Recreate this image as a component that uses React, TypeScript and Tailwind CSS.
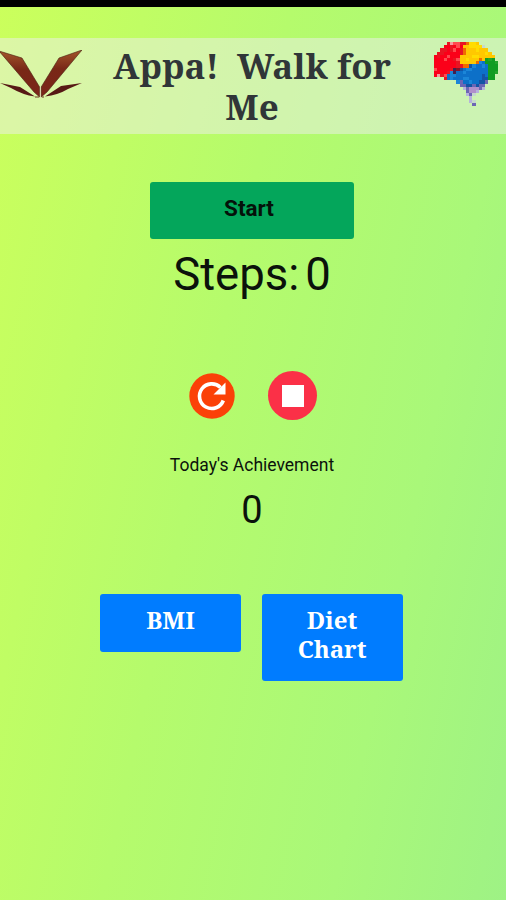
import React from "react";

const palette: Record<string, string> = {
  r: "#e81522", R: "#fb0019", p: "#ff4a50", o: "#f06a00", y: "#ffc800", Y: "#ffdc00",
  g: "#119c22", G: "#22a52b", b: "#0d70c8", B: "#1b86d8", n: "#1454a5", d: "#85142b",
  k: "#43204f", v: "#6c66b5", V: "#b08fcb", l: "#b6b2dc", w: "#c5d9cd", f: "#f79aa0",
};

const brain = [
  "....rfpprroYYy......",
  "...RRrRpRyyYYYYw....",
  "..rrRrpRroyyyYyyy...",
  ".rrRRRRRroyyyyyyYy..",
  "RrRRpRRRyyyyYYyyyyy.",
  "RRRpRRrpyyYyyyoygGg.",
  "RRRRRRRryyyyyoBbgggG",
  "RRRRRRRrroonBbbBbggg",
  "pRRRRrkdnbBBbbbbbggg",
  "RRRRrBkbbBbbbbbbbggG",
  "RfrpbBBbbbbbbbbnbgg.",
  "...rbBbbbBBbbbbnngg.",
  ".......BvbbBbbnnv...",
  "........vvnnvnvv....",
  ".........lvVVVvl....",
  "..........vVVl......",
  "..........lvw.......",
  "...........l........",
  "...........lw.......",
  "............v.......",
];

function Logo() {
  return (
    <svg className="mt-[12px] h-[49px] w-[82px] shrink-0" viewBox="0 0 82 49">
      <defs>
        <linearGradient id="wing" x1="0" y1="0" x2="0" y2="1">
          <stop offset="0" stopColor="#a3562b" />
          <stop offset=".4" stopColor="#792817" />
          <stop offset="1" stopColor="#7b2419" />
        </linearGradient>
      </defs>
      <path d="M-1 1L22 8L39.600 37V47L34 42Z" fill="url(#wing)" stroke="#48200f" strokeWidth=".6" />
      <path d="M82 0L59 8L41.200 37V47L47 42Z" fill="url(#wing)" stroke="#48200f" strokeWidth=".6" />
      <path d="M0 33L20 37L35 46.500Q23 45 11 38Z" fill="#571915" />
      <path d="M82 33L61 36L45 46.500Q58 45 68 39Z" fill="#571915" />
      <path d="M35 47H39M42 47H44" stroke="#6c361d" />
      <path d="M40.400 37V48" stroke="#e6d8bd" strokeWidth=".8" />
    </svg>
  );
}

function Brain() {
  return (
    <svg className="mt-[4px] h-[64px] w-[64px] shrink-0" viewBox="0 0 20 20" shapeRendering="crispEdges">
      {brain.flatMap((row, y) =>
        row.split("").map((c, x) =>
          c === "." ? null : <rect key={`${x}-${y}`} x={x} y={y} width="1" height="1" fill={palette[c]} />
        )
      )}
    </svg>
  );
}

export default function App() {
  return (
    <main className="flex h-[900px] w-[506px] flex-col overflow-hidden bg-[linear-gradient(102deg,#cbff5c_0%,#b5fb6c_42%,#a9f879_75%,#9ef285_100%)] font-['Roboto',sans-serif] text-[#0b120b]">
      <div className="h-[7px] shrink-0 bg-black" />
      <header className="mt-[31px] flex h-[96px] shrink-0 items-start bg-[#eeeeee]/50 pr-2">
        <Logo />
        <h1 className="flex-1 whitespace-pre pr-[12px] pt-[7px] text-center font-['Noto_Serif','DejaVu_Serif',serif] text-[35px] leading-[41px] font-bold text-[#303638]">{"Appa!  Walk for\nMe"}</h1>
        <Brain />
      </header>
      <button className="mt-[48px] ml-[150px] h-[57px] w-[204px] shrink-0 rounded-[3px] bg-[#04a65b] pr-[6px] pb-[4px] text-[22.5px] font-bold text-[#04120a]">Start</button>
      <div className="mt-[8px] flex h-[56px] shrink-0 items-center justify-center gap-[6px] pr-[2px] text-[45.5px] leading-[56px]">
        <span>Steps:</span><span>0</span>
      </div>
      <div className="mt-[68px] ml-[189px] flex h-[49px] shrink-0 items-center gap-[33px]">
        <button aria-label="Reset">
          <svg className="block h-[46px] w-[46px]" viewBox="0 0 46 46">
            <circle cx="23" cy="23" r="22.700" fill="#fb4108" />
            <path d="M34.300 27.500A12.300 12.300 0 1 1 31.500 14.500" fill="none" stroke="#fff" strokeWidth="3.600" />
            <path d="M36.500 9.500V21.500H24.500Z" fill="#fff" />
          </svg>
        </button>
        <button aria-label="Stop" className="flex h-[49px] w-[49px] items-center justify-center rounded-full bg-[#fb3047]">
          <span className="h-[22px] w-[22px] bg-white" />
        </button>
      </div>
      <p className="mt-[33px] shrink-0 pr-[2px] text-center text-[17.5px] leading-[25px]">Today's Achievement</p>
      <p className="mt-[7px] shrink-0 pr-[2px] text-center text-[38px] leading-[50px]">0</p>
      <div className="mt-[59px] ml-[100px] flex shrink-0 items-start gap-[20px] font-['Noto_Serif','DejaVu_Serif',serif] text-[24px] leading-[29px] font-bold text-white">
        <button className="h-[58px] w-[141px] rounded-[3px] bg-[#007cff] pb-[8px]">BMI</button>
        <button className="ml-[1px] h-[87px] w-[141px] rounded-[3px] bg-[#007cff] pr-[1px] pb-[8px] whitespace-pre">{"Diet\nChart"}</button>
      </div>
    </main>
  );
}
